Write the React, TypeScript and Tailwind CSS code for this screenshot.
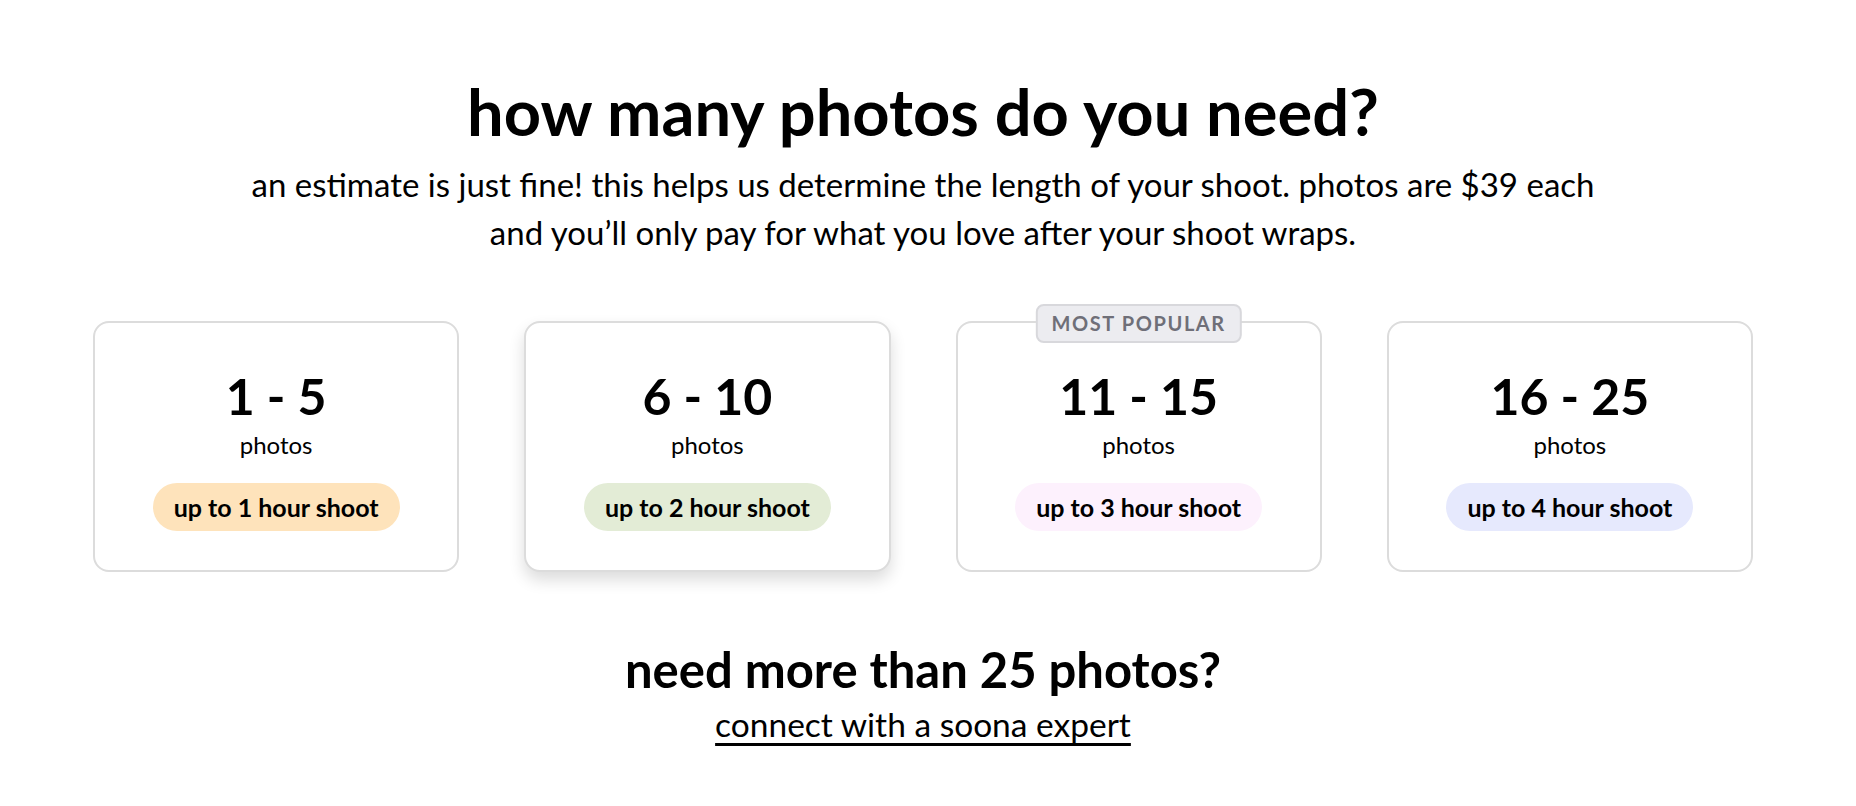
import React from "react";

type Tier = {
  range: string;
  hours: string;
  pill: string;
  popular?: boolean;
  active?: boolean;
};

const tiers: Tier[] = [
  { range: "1 - 5", hours: "up to 1 hour shoot", pill: "bg-[#fee3bb]" },
  { range: "6 - 10", hours: "up to 2 hour shoot", pill: "bg-[#e3ecd6]", active: true },
  { range: "11 - 15", hours: "up to 3 hour shoot", pill: "bg-[#fdf1fd]", popular: true },
  { range: "16 - 25", hours: "up to 4 hour shoot", pill: "bg-[#e6e9fd]" },
];

const TierCard = ({ tier }: { tier: Tier }) => (
  <button
    className={
      "relative flex flex-col items-center rounded-2xl border-2 border-[#dcdcdc] bg-white pt-[48px] pb-[39px] " +
      (tier.active ? "shadow-[0_8px_16px_rgba(0,0,0,0.14)]" : "")
    }
  >
    {tier.popular && (
      <span className="absolute left-1/2 top-[-19px] -translate-x-1/2 whitespace-nowrap rounded-lg border-2 border-[#d8d8dc] bg-[#ececf0] px-[14px] text-[20px] font-bold leading-[35px] tracking-[0.08em] text-[#6f6f78]">
        MOST POPULAR
      </span>
    )}
    <span className="text-[50px] font-bold leading-none">{tier.range}</span>
    <span className="mt-2 text-[24px] leading-[32px]">photos</span>
    <span
      className={
        "mt-[22px] whitespace-nowrap rounded-full px-[21px] text-[25px] font-bold leading-[48px] " + tier.pill
      }
    >
      {tier.hours}
    </span>
  </button>
);

export default function App() {
  return (
    <div className="min-h-[806px] w-[1846px] bg-white font-['Lato',sans-serif] text-black">
      <div className="flex flex-col items-center px-[93px] pt-[75px]">
        <h1 className="text-[65px] font-bold leading-[72px]">how many photos do you need?</h1>
        <p className="mt-[13px] text-center text-[33px] leading-[48px]">
          an estimate is just fine! this helps us determine the length of your shoot. photos are $39 each
          <br />
          and you’ll only pay for what you love after your shoot wraps.
        </p>
        <div className="mt-[65px] grid w-full grid-cols-4 gap-[65px]">
          {tiers.map((t) => (
            <TierCard key={t.range} tier={t} />
          ))}
        </div>
        <h2 className="mt-[69px] text-[49px] font-bold leading-[56px]">need more than 25 photos?</h2>
        <a href="#" className="mt-[7px] text-[33.5px] leading-[40px] underline underline-offset-[6px]">
          connect with a soona expert
        </a>
      </div>
    </div>
  );
}
